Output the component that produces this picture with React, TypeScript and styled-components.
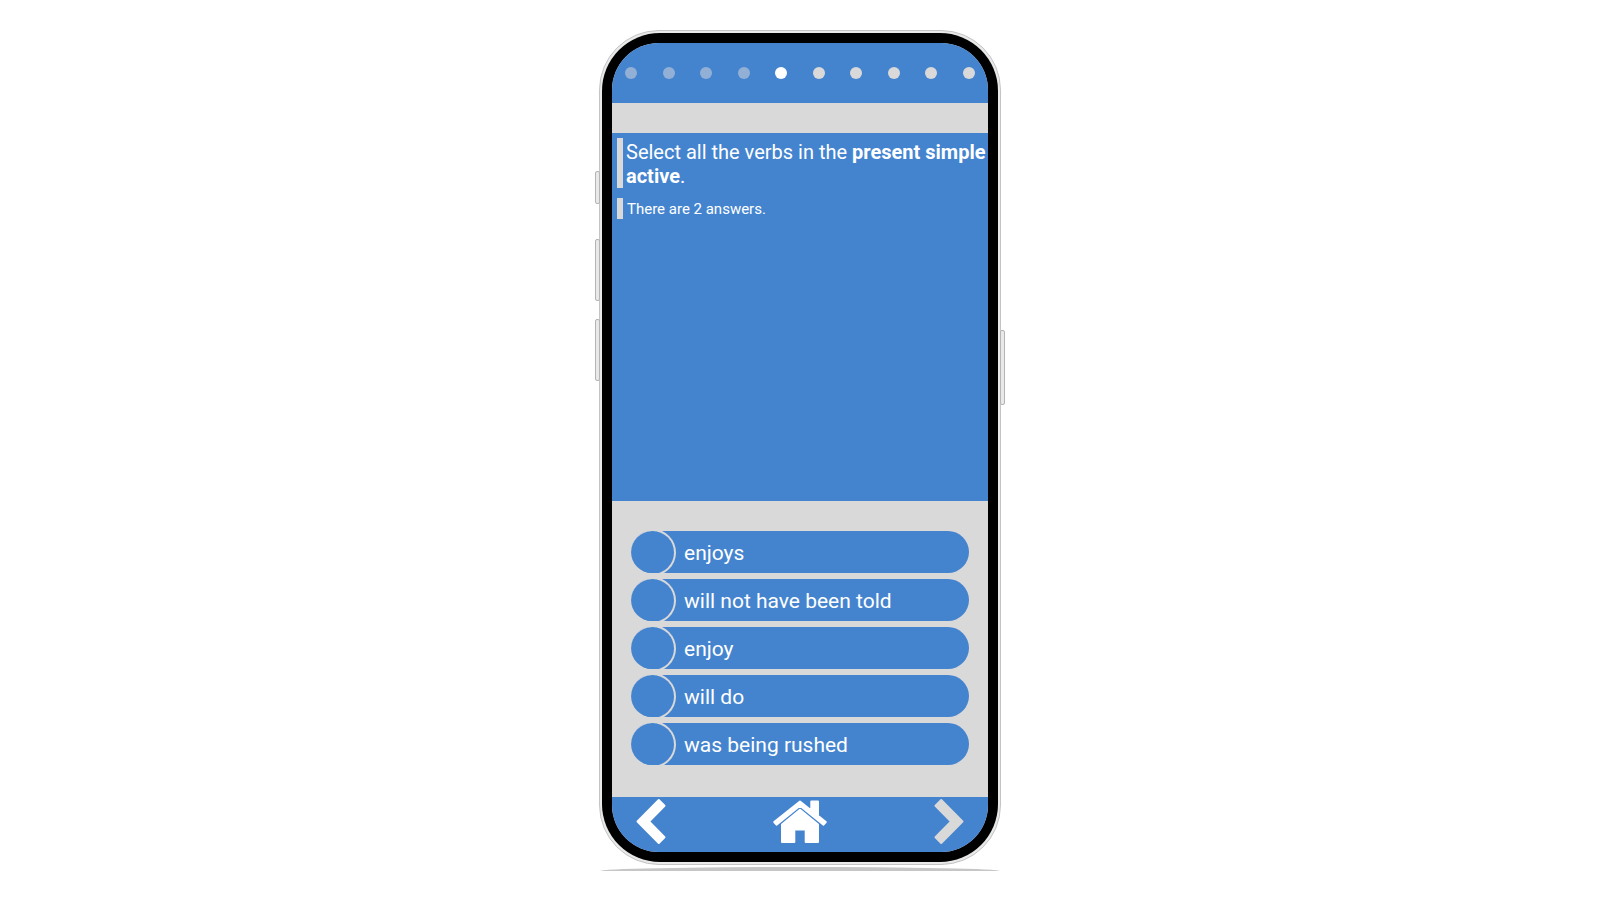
import React, { useState } from "react";
import styled, { createGlobalStyle } from "styled-components";

const blue = "#4484cf";
const grey = "#d9d9d9";

const GlobalStyle = createGlobalStyle`
  *, *::before, *::after { box-sizing: border-box; }
  body {
    margin: 0;
    background: #fff;
    font-family: Roboto, "Liberation Sans", sans-serif;
  }
`;

const Page = styled.main`
  min-height: 100vh;
  padding: 30px 16px 28px;
  display: flex;
  flex-direction: column;
  align-items: center;
`;

const Phone = styled.div`
  position: relative;
  width: 100%;
  max-width: 402px;
  padding: 2px;
  border: 1px solid #c4c4c4;
  border-radius: 60px;
  background: #e9e9e9;
`;

const SideKey = styled.span<{ $side: "left" | "right"; $top: number; $height: number }>`
  position: absolute;
  ${(p) => p.$side}: -5px;
  top: ${(p) => p.$top}px;
  width: 5px;
  height: ${(p) => p.$height}px;
  border: 1px solid #b4b4b4;
  border-radius: 2px;
  background: #e9e9e9;
`;

const Bezel = styled.div`
  padding: 10px;
  border-radius: 58px;
  background: #000;
`;

const Screen = styled.div`
  display: flex;
  flex-direction: column;
  overflow: hidden;
  border-radius: 47px;
  background: ${grey};
  color: #fff;
`;

const Progress = styled.ol`
  display: flex;
  justify-content: space-between;
  align-items: center;
  height: 60px;
  margin: 0;
  padding: 0 13px;
  list-style: none;
  background: ${blue};
`;

type DotState = "done" | "current" | "next";
const dotColor: Record<DotState, string> = { done: "#92b0d6", current: "#fff", next: grey };

const Dot = styled.li<{ $state: DotState }>`
  width: 12px;
  height: 12px;
  border-radius: 50%;
  background: ${(p) => dotColor[p.$state]};
`;

const Prompt = styled.section`
  display: flex;
  flex-direction: column;
  gap: 10px;
  min-height: 368px;
  margin-top: 30px;
  padding: 5px 0 5px 5px;
  background: ${blue};
`;

const Question = styled.h1`
  margin: 0;
  padding: 2px 0 0 3px;
  border-left: 6px solid ${grey};
  font-size: 20px;
  line-height: 24px;
  font-weight: 400;
`;

const Hint = styled.p`
  margin: 0;
  padding: 1px 0 0 4px;
  border-left: 6px solid ${grey};
  font-size: 15px;
  line-height: 20px;
`;

const Options = styled.form`
  display: flex;
  flex-direction: column;
  gap: 6px;
  padding: 30px 19px 32px;
`;

const Option = styled.label`
  display: flex;
  align-items: center;
  gap: 10px;
  height: 42px;
  overflow: hidden;
  border-radius: 21px;
  background: ${blue};
  font-size: 21px;
  line-height: 26px;
  cursor: pointer;
`;

const OptionText = styled.span`
  padding-top: 2px;
`;

const Tick = styled.input`
  appearance: none;
  flex: none;
  width: 43px;
  height: 43px;
  margin: 0;
  border-radius: 50%;
  background: ${blue};
  box-shadow: 0 0 0 2px ${grey};
  &:checked { background: #2c5f9e; }
`;

const Footer = styled.nav`
  display: flex;
  justify-content: space-between;
  align-items: flex-start;
  height: 55px;
  padding: 0 22px;
  background: ${blue};
`;

const NavButton = styled.button<{ $muted?: boolean }>`
  padding: 0;
  border: 0;
  background: none;
  color: ${(p) => (p.$muted ? grey : "#fff")};
  cursor: pointer;
  svg { display: block; fill: currentColor; stroke: currentColor; stroke-width: 2; stroke-linejoin: round; }
`;

const FloorShadow = styled.div`
  width: 100%;
  max-width: 400px;
  height: 4px;
  margin-top: 2px;
  border-radius: 50% 50% 0 0 / 100% 100% 0 0;
  background: #c6c6c6;
`;

const dots: DotState[] = ["done", "done", "done", "done", "current", "next", "next", "next", "next", "next"];
const answers = ["enjoys", "will not have been told", "enjoy", "will do", "was being rushed"];

export default function App() {
  const [picked, setPicked] = useState<string[]>([]);
  const toggle = (a: string) =>
    setPicked((list) => (list.includes(a) ? list.filter((x) => x !== a) : [...list, a]));

  return (
    <Page>
      <GlobalStyle />
      <Phone>
        <SideKey $side="left" $top={140} $height={33} />
        <SideKey $side="left" $top={208} $height={62} />
        <SideKey $side="left" $top={288} $height={62} />
        <SideKey $side="right" $top={299} $height={75} />
        <Bezel>
          <Screen>
            <Progress>
              {dots.map((state, i) => (
                <Dot key={i} $state={state} />
              ))}
            </Progress>
            <Prompt>
              <Question>
                Select all the verbs in the <b>present simple active</b>.
              </Question>
              <Hint>There are 2 answers.</Hint>
            </Prompt>
            <Options>
              {answers.map((a) => (
                <Option key={a}>
                  <Tick type="checkbox" checked={picked.includes(a)} onChange={() => toggle(a)} />
                  <OptionText>{a}</OptionText>
                </Option>
              ))}
            </Options>
            <Footer>
              <NavButton type="button" aria-label="Previous">
                <svg width="34" height="50" viewBox="0 0 34 50">
                  <path d="M24.800 3 L30.500 8.700 L15 24.500 L30.500 40.300 L24.800 46 L3.500 24.500 Z" />
                </svg>
              </NavButton>
              <NavButton type="button" aria-label="Home">
                <svg width="56" height="50" viewBox="0 0 56 50">
                  <path d="M28 4.500 L2.200 25 L4.500 27.700 L28 8.700 L51.500 27.700 L53.800 25 L46 18.700 V4.500 H39.300 V13.500 Z" />
                  <path d="M28 12.800 L10 27.500 V45 H22.300 V32.500 H33.700 V45 H46 V27.500 Z" />
                </svg>
              </NavButton>
              <NavButton type="button" aria-label="Next" $muted>
                <svg width="34" height="50" viewBox="0 0 34 50">
                  <path d="M9.200 3 L3.500 8.700 L19 24.500 L3.500 40.300 L9.200 46 L30.500 24.500 Z" />
                </svg>
              </NavButton>
            </Footer>
          </Screen>
        </Bezel>
      </Phone>
      <FloorShadow />
    </Page>
  );
}
